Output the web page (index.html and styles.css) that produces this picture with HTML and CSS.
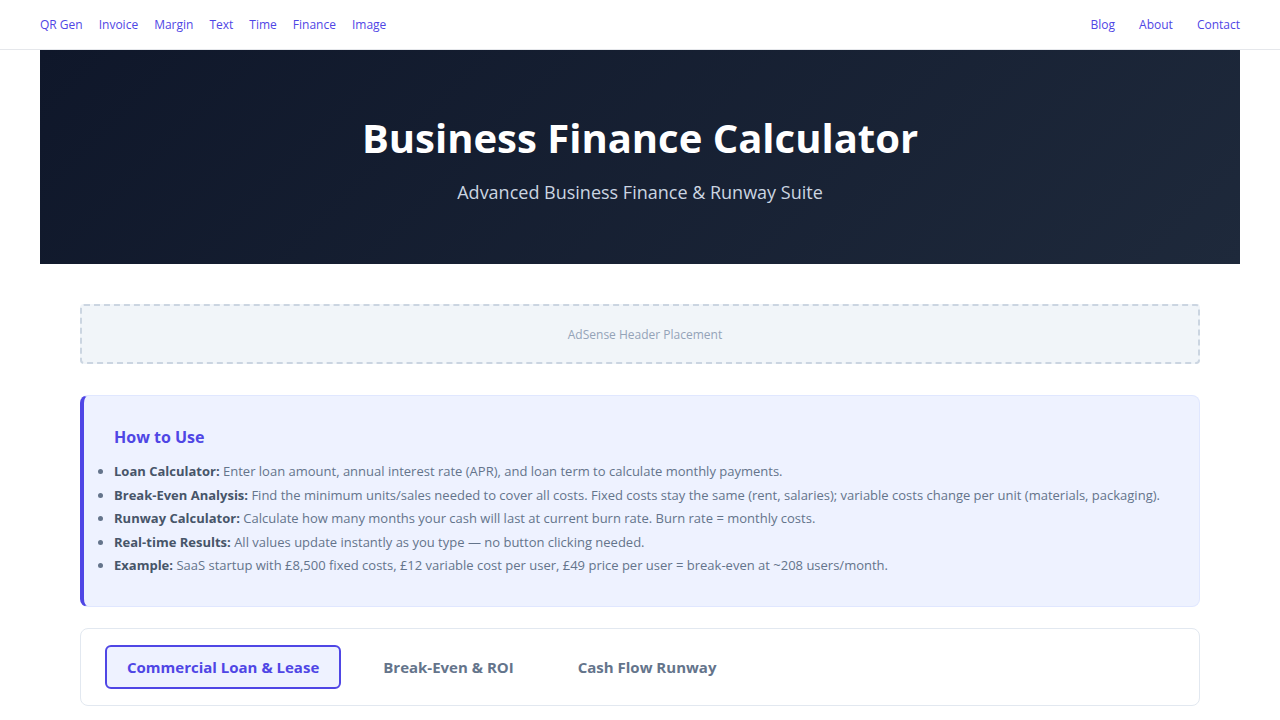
FILE: index.html
```html
<!DOCTYPE html>
<html lang="en">
<head>
  <meta charset="UTF-8" />
  <meta name="viewport" content="width=device-width, initial-scale=1.0" />
  <title>Business Finance Calculator</title>
  <link rel="stylesheet" href="styles.css">
</head>
<body>
  <nav class="topnav">
    <div class="nav-inner">
      <div class="nav-links">
        <a href="#">QR Gen</a>
        <a href="#">Invoice</a>
        <a href="#">Margin</a>
        <a href="#">Text</a>
        <a href="#">Time</a>
        <a href="#">Finance</a>
        <a href="#">Image</a>
      </div>
      <div class="nav-links nav-right">
        <a href="#">Blog</a>
        <a href="#">About</a>
        <a href="#">Contact</a>
      </div>
    </div>
  </nav>

  <header class="hero">
    <h1>Business Finance Calculator</h1>
    <p>Advanced Business Finance &amp; Runway Suite</p>
  </header>

  <main class="content">
    <div class="ad-slot">AdSense Header Placement</div>

    <section class="howto">
      <h2>How to Use</h2>
      <ul>
        <li><strong>Loan Calculator:</strong> Enter loan amount, annual interest rate (APR), and loan term to calculate monthly payments.</li>
        <li><strong>Break-Even Analysis:</strong> Find the minimum units/sales needed to cover all costs. Fixed costs stay the same (rent, salaries); variable costs change per unit (materials, packaging).</li>
        <li><strong>Runway Calculator:</strong> Calculate how many months your cash will last at current burn rate. Burn rate = monthly costs.</li>
        <li><strong>Real-time Results:</strong> All values update instantly as you type — no button clicking needed.</li>
        <li><strong>Example:</strong> SaaS startup with £8,500 fixed costs, £12 variable cost per user, £49 price per user = break-even at ~208 users/month.</li>
      </ul>
    </section>

    <div class="tabs">
      <button class="tab active">Commercial Loan &amp; Lease</button>
      <button class="tab">Break-Even &amp; ROI</button>
      <button class="tab">Cash Flow Runway</button>
    </div>
  </main>
</body>
</html>
```

FILE: styles.css
```css
body {
  font-family: "Open Sans", "Noto Sans", sans-serif;
  margin: 0;
  padding: 0;
  background: #fff;
  color: #334155;
}
a {
  text-decoration: none;
}
.topnav {
  height: 49px;
  border-bottom: 1px solid #e5e7eb;
  background: #fff;
}
.nav-inner {
  max-width: 1200px;
  margin: 0 auto;
  height: 100%;
  display: flex;
  align-items: center;
  justify-content: space-between;
}
.nav-links {
  display: flex;
  gap: 16px;
}
.nav-right {
  gap: 24px;
}
.nav-links a {
  color: #4f46e5;
  font-size: 12px;
  line-height: 16px;
  padding-top: 1px;
}
.hero {
  max-width: 1200px;
  margin: 0 auto;
  height: 214px;
  box-sizing: border-box;
  padding-top: 60px;
  background: linear-gradient(135deg, #0f172a 0%, #1e293b 100%);
  text-align: center;
  color: #fff;
}
.hero h1 {
  margin: 0;
  font-size: 40px;
  font-weight: 700;
  line-height: 56px;
}
.hero p {
  margin: 14px 0 0;
  font-size: 18px;
  color: #cbd5e1;
}
.content {
  max-width: 1120px;
  margin: 0 auto;
  padding-top: 40px;
}
.ad-slot {
  height: 60px;
  box-sizing: border-box;
  border: 2px dashed #cbd5e1;
  border-radius: 4px;
  background: #f1f5f9;
  color: #94a3b8;
  font-size: 12px;
  padding-left: 10px;
  display: flex;
  align-items: center;
  justify-content: center;
}
.howto {
  margin-top: 31px;
  background: #eef2ff;
  border: 1px solid #e0e7ff;
  border-left: 4px solid #4f46e5;
  border-radius: 8px;
  padding: 30px 30px 28px;
}
.howto h2 {
  margin: 0 0 12px;
  color: #4f46e5;
  font-size: 16px;
  font-weight: 700;
}
.howto ul {
  margin: 0;
  padding-left: 0;
  list-style-position: outside;
}
.howto li {
  font-size: 13px;
  line-height: 23.5px;
  color: #64748b;
}
.howto li strong {
  color: #475569;
}
.tabs {
  margin-top: 21px;
  border: 1px solid #e2e8f0;
  border-radius: 8px;
  padding: 16px 24px;
  display: flex;
  gap: 20px;
}
.tab {
  font-family: inherit;
  font-size: 15px;
  font-weight: 700;
  color: #64748b;
  background: none;
  border: 2px solid transparent;
  border-radius: 6px;
  height: 44px;
  padding: 0 20px;
  cursor: pointer;
}
.tab.active {
  color: #4f46e5;
  border-color: #4f46e5;
  background: #eef2ff;
}
```
